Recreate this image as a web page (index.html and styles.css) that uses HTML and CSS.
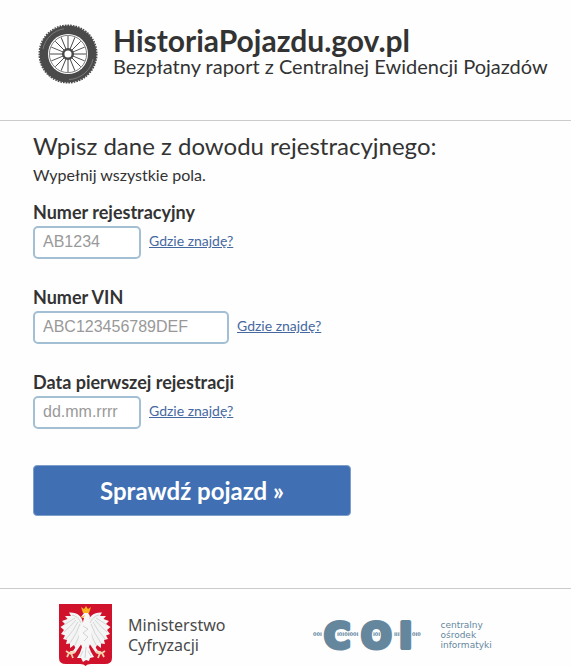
FILE: index.html
```html
<!DOCTYPE html>
<html lang="pl">
<head>
    <meta charset="UTF-8">
    <meta name="viewport" content="width=device-width, initial-scale=1.0">
    <title>HistoriaPojazdu.gov.pl</title>
    <link rel="stylesheet" href="styles.css">
</head>
<body>
    <header class="header">
        <svg class="wheel" viewBox="0 0 60 60" aria-hidden="true">
            <circle cx="30" cy="30" r="28.500" fill="#4a4a4a"/>
            <circle cx="30" cy="30" r="28.800" fill="none" stroke="#4a4a4a" stroke-width="1.500" stroke-dasharray="1.6 1.1"/>
            <path d="M5 25A25.500 25.500 0 0 1 26 4.800M55 35A25.500 25.500 0 0 1 31 55.500" fill="none" stroke="#999" stroke-width="0.6"/>
            <circle cx="30" cy="30" r="20" fill="#fff"/>
            <circle cx="30" cy="30" r="18.600" fill="none" stroke="#4a4a4a" stroke-width="0.7"/>
            <g stroke="#4a4a4a" stroke-width="1">
                <path id="spokes" d="M30 12V48M12 30H48M17.300 17.300L42.700 42.700M42.700 17.300L17.300 42.700"/>
                <use href="#spokes" transform="rotate(22.500 30 30)"/>
            </g>
            <circle cx="30" cy="30" r="4.800" fill="#fff" stroke="#4a4a4a" stroke-width="2.500"/>
        </svg>
        <div class="brand">
            <h1 class="brand-title">HistoriaPojazdu.gov.pl</h1>
            <p class="brand-subtitle">Bezpłatny raport z Centralnej Ewidencji Pojazdów</p>
        </div>
    </header>

    <main class="content">
        <h2 class="form-title">Wpisz dane z dowodu rejestracyjnego:</h2>
        <p class="form-note">Wypełnij wszystkie pola.</p>

        <form class="vehicle-form">
            <div class="field">
                <label for="plate">Numer rejestracyjny</label>
                <div class="field-row">
                    <input type="text" id="plate" class="input" placeholder="AB1234">
                    <a href="#">Gdzie znajdę?</a>
                </div>
            </div>

            <div class="field">
                <label for="vin">Numer VIN</label>
                <div class="field-row">
                    <input type="text" id="vin" class="input input-wide" placeholder="ABC123456789DEF">
                    <a href="#">Gdzie znajdę?</a>
                </div>
            </div>

            <div class="field">
                <label for="date">Data pierwszej rejestracji</label>
                <div class="field-row">
                    <input type="text" id="date" class="input" placeholder="dd.mm.rrrr">
                    <a href="#">Gdzie znajdę?</a>
                </div>
            </div>

            <button type="submit" class="submit-button">Sprawdź pojazd »</button>
        </form>
    </main>

    <footer class="footer">
        <div class="ministry">
            <svg class="emblem" viewBox="0 0 53 62" aria-hidden="true">
                <path d="M0 0H53V54Q53 60 46 60H32Q28 60 26.500 62Q25 60 21 60H7Q0 60 0 54Z" fill="#d0122d"/>
                <!-- wings -->
                <g id="wing">
                    <path d="M24 19C23 12 18 8 10 8.500L12 12L6 12L8.500 15L3 17L6 20L1.500 23L5 26L2 30L6 31.500L4 35L8 36L7 40L11 39.500L11 44L15 41L17 45L20 40L24 37Z" fill="#f4f4f4"/>
                    <path d="M21 20Q18 29 11 39M19 18Q15 26 7 35M17 16Q12 22 5 28M16 14Q11 17 5 21M22 25Q20 34 16 41M13 11Q19 12 22 19" fill="none" stroke="#c4c8c8" stroke-width="0.7"/>
                    <path d="M22 38L15 48L11 49" fill="none" stroke="#f4f4f4" stroke-width="3"/>
                    <path d="M16 48L10 49L8 53M12 49L14 54M10 49L7 47" fill="none" stroke="#f6d3a8" stroke-width="1.800"/>
                </g>
                <use href="#wing" transform="matrix(-1 0 0 1 53 0)"/>
                <!-- body, head and tail -->
                <path d="M22 13L25 9Q30 7 31 13L30 18L33 25L32 37L30 43L32 48L35 53L31 54L30 57L27 56L24 58L22 54L18 54L21 49L23 43L20 35L20 25L24 18L25 14Z" fill="#f7f7f7"/>
                <path d="M24 22L29 25L24 29L29 33L25 37M27 43L26 54M24 47L21 53M29 47L32 52" fill="none" stroke="#c6caca" stroke-width="0.8"/>
                <path d="M22 3L25 5L27 2L29 5L32 3L30 9H24ZM26 11L21 14L25 13Z" fill="#fbb321"/>
            </svg>
            <p class="ministry-name">Ministerstwo<br>Cyfryzacji</p>
        </div>
        <div class="coi">
            <svg class="coi-logo" viewBox="0 0 110 50" role="img" aria-label="COI">
                <text class="coi-letters" y="38"><tspan x="11">C</tspan><tspan x="48">O</tspan><tspan x="86">I</tspan></text>
                <text class="coi-bits" y="26"><tspan x="0">00I</tspan><tspan x="24">I0I0I00I</tspan><tspan x="60">I0I</tspan><tspan x="81">III</tspan><tspan x="99">0I0</tspan></text>
            </svg>
            <p class="coi-name">centralny<br>ośrodek<br>informatyki</p>
        </div>
    </footer>
</body>
</html>
```

FILE: styles.css
```css
* {
    box-sizing: border-box;
}

body, h1, h2, p {
    margin: 0;
    padding: 0;
}

body {
    background-color: #fefefe;
    color: #333;
    font-family: Lato, sans-serif;
}

/* Header */
.header {
    display: flex;
    align-items: flex-start;
    gap: 15px;
    padding: 24px 16px 36px 38px;
    border-bottom: 1px solid #ccc;
}

.wheel {
    width: 60px;
    height: 60px;
    flex-shrink: 0;
}

.brand-title {
    font-size: 30px;
    font-weight: bold;
    line-height: 33px;
}

.brand-subtitle {
    font-size: 20px;
    line-height: 18px;
}

/* Form */
.content {
    padding: 10px 33px 72px;
}

.form-title {
    font-size: 24px;
    font-weight: normal;
    line-height: 30px;
}

.form-note {
    font-size: 16px;
    line-height: 28px;
    margin-bottom: 11px;
}

.field {
    margin-bottom: 26px;
}

.field label {
    display: block;
    font-size: 18px;
    font-weight: bold;
    line-height: 24px;
    margin-bottom: 2px;
}

.field-row {
    display: flex;
    align-items: center;
    gap: 8px;
}

.input {
    width: 108px;
    height: 33px;
    padding: 0 8px 2px;
    border: 2px solid #a3bfd3;
    border-radius: 5px;
    background-color: #fff;
    font-family: "Liberation Sans", Arial, sans-serif;
    font-size: 16px;
}

.input-wide {
    width: 196px;
}

.input::placeholder {
    color: #999;
}

.field-row a {
    padding-bottom: 4px;
    color: #4668a0;
    font-size: 14px;
}

.submit-button {
    width: 318px;
    max-width: 100%;
    height: 51px;
    margin-top: 10px;
    border: 1px solid #7f9fcb;
    border-radius: 4px;
    background-color: #406fb3;
    color: #fff;
    font-family: Lato, sans-serif;
    font-size: 24px;
    font-weight: bold;
}

/* Footer */
.footer {
    display: flex;
    gap: 88px;
    padding: 15px 16px 0 59px;
    border-top: 1px solid #ccc;
}

.ministry {
    display: flex;
    align-items: center;
    gap: 16px;
}

.emblem {
    width: 53px;
    height: 62px;
}

.ministry-name {
    color: #4a4a4a;
    font-family: "Noto Sans", sans-serif;
    font-size: 16px;
    line-height: 20px;
}

.coi {
    display: flex;
    align-items: center;
    gap: 17px;
    color: #65879e;
}

.coi-logo {
    width: 110px;
    height: 50px;
    overflow: visible;
}

.coi-letters {
    fill: #65879e;
    stroke: #65879e;
    stroke-width: 4px;
    stroke-linejoin: round;
    font-family: "DejaVu Sans", sans-serif;
    font-size: 36px;
    font-weight: bold;
}

.coi-bits {
    fill: #65879e;
    font-family: "DejaVu Sans", sans-serif;
    font-size: 5px;
    font-weight: bold;
}

.coi-name {
    font-family: "DejaVu Sans", sans-serif;
    font-size: 9px;
    line-height: 10px;
}
```
